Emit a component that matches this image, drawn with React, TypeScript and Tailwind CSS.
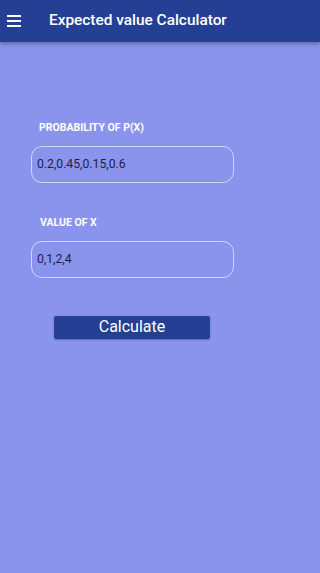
export default function App() {
  return (
    <div className="flex min-h-[573px] w-full flex-col bg-[#8a94ec] font-['Roboto',sans-serif]">
      <header className="relative z-10 flex h-[42px] items-center bg-[#253f94] shadow-[0_2px_4px_rgba(0,0,0,0.3)]">
        <div className="ml-[7px] flex w-[14px] flex-col gap-[3px]">
          <span className="h-[2px] bg-white" />
          <span className="h-[2px] bg-white" />
          <span className="h-[2px] bg-white" />
        </div>
        <h1 className="ml-[28px] text-[15.4px] font-medium text-white">
          Expected value Calculator
        </h1>
      </header>

      <main className="flex flex-col px-[31px] pt-[78px]">
        <label className="ml-[8px] text-[10.5px] font-bold text-white">PROBABILITY OF P(X)</label>
        <div className="mt-[10px] flex h-[37px] w-[203px] items-center rounded-[11px] border border-white/60 px-[5px] text-[12.2px] text-[#1c1f45]">
          0.2,0.45,0.15,0.6
        </div>

        <label className="ml-[9px] mt-[32px] text-[10.5px] font-bold text-white">VALUE OF X</label>
        <div className="mt-[10px] flex h-[37px] w-[203px] items-center rounded-[11px] border border-white/60 px-[5px] text-[12.2px] text-[#1c1f45]">
          0,1,2,4
        </div>

        <button className="ml-[23px] mt-[38px] flex h-[23px] w-[156px] items-center justify-center rounded-[2px] bg-[#253f94] text-[16px] text-white shadow-[0_1px_2px_rgba(0,0,0,0.3)]">
          Calculate
        </button>
      </main>
    </div>
  );
}
